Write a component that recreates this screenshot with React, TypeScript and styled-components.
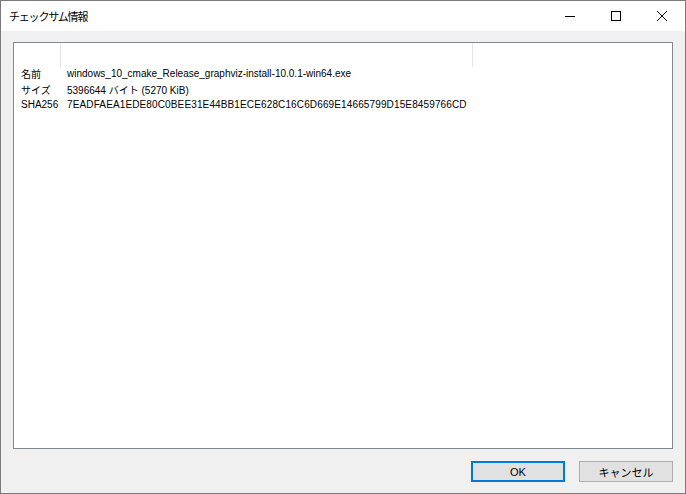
import React from "react";
import styled, { createGlobalStyle } from "styled-components";

const GlobalStyle = createGlobalStyle`
  html, body {
    margin: 0;
    padding: 0;
    background: #ffffff;
  }
  * {
    box-sizing: border-box;
  }
`;

const uiFont = `"Liberation Sans", "Noto Sans CJK JP", sans-serif`;

const Window = styled.div`
  width: 686px;
  height: 494px;
  border: 1px solid #7a7a7a;
  display: flex;
  flex-direction: column;
  background: #f0f0f0;
  font-family: ${uiFont};
  color: #000;
  overflow: hidden;
`;

const TitleBar = styled.div`
  height: 30px;
  background: #ffffff;
  display: flex;
  align-items: center;
  flex-shrink: 0;
`;

const Title = styled.div`
  flex: 1;
  padding-left: 8px;
  font-size: 11px;
  letter-spacing: -1.2px;
  font-family: "Noto Sans CJK JP", sans-serif;
`;

const Caption = styled.div`
  width: 46px;
  height: 30px;
  display: flex;
  align-items: center;
  justify-content: center;
`;

const Body = styled.div`
  flex: 1;
  display: flex;
  flex-direction: column;
  padding: 11px 12px 12px 12px;
`;

const ListBox = styled.div`
  height: 407px;
  background: #ffffff;
  border: 1px solid #828790;
  display: flex;
  flex-direction: column;
`;

const HeaderRow = styled.div`
  height: 24px;
  display: grid;
  grid-template-columns: 47px 412px 1fr;
`;

const HeaderCell = styled.div<{ $last?: boolean }>`
  border-right: ${(p) => (p.$last ? "none" : "1px solid #e5e5e5")};
`;

const Rows = styled.div`
  margin-top: -1px;
  display: flex;
  flex-direction: column;
`;

const Row = styled.div`
  height: 15.5px;
  display: grid;
  grid-template-columns: 46px 1fr;
  align-items: center;
  padding-left: 7px;
  font-size: 10px;
  white-space: nowrap;
`;

const Label = styled.span`
  font-size: 10px;
`;

const Value = styled.span<{ $spacing?: number }>`
  letter-spacing: ${(p) => p.$spacing ?? 0}px;
`;

const Footer = styled.div`
  display: flex;
  justify-content: flex-end;
  gap: 14px;
  padding-top: 12px;
`;

const Button = styled.button<{ $primary?: boolean }>`
  width: 94px;
  height: 21px;
  background: #e1e1e1;
  border: ${(p) => (p.$primary ? "2px solid #0078d7" : "1px solid #adadad")};
  font-family: ${uiFont};
  font-size: 11px;
  padding: 0;
  color: #000;
`;

const rows = [
  { label: "名前", value: "windows_10_cmake_Release_graphviz-install-10.0.1-win64.exe", spacing: 0 },
  { label: "サイズ", value: "5396644 バイト (5270 KiB)", spacing: 0 },
  { label: "SHA256", value: "7EADFAEA1EDE80C0BEE31E44BB1ECE628C16C6D669E14665799D15E8459766CD", spacing: 0.13 },
];

export default function App() {
  return (
    <>
      <GlobalStyle />
      <Window>
        <TitleBar>
          <Title>チェックサム情報</Title>
          <Caption>
            <svg width="10" height="10" viewBox="0 0 10 10">
              <line x1="0" y1="5.5" x2="10" y2="5.5" stroke="#000" strokeWidth="1" />
            </svg>
          </Caption>
          <Caption>
            <svg width="10" height="10" viewBox="0 0 10 10">
              <rect x="0.5" y="0.5" width="9" height="9" fill="none" stroke="#000" strokeWidth="1" />
            </svg>
          </Caption>
          <Caption>
            <svg width="10" height="10" viewBox="0 0 10 10">
              <path d="M0 0 L10 10 M10 0 L0 10" stroke="#000" strokeWidth="1" />
            </svg>
          </Caption>
        </TitleBar>
        <Body>
          <ListBox>
            <HeaderRow>
              <HeaderCell />
              <HeaderCell />
              <HeaderCell $last />
            </HeaderRow>
            <Rows>
              {rows.map((r) => (
                <Row key={r.label}>
                  <Label>{r.label}</Label>
                  <Value $spacing={r.spacing}>{r.value}</Value>
                </Row>
              ))}
            </Rows>
          </ListBox>
          <Footer>
            <Button $primary>OK</Button>
            <Button>キャンセル</Button>
          </Footer>
        </Body>
      </Window>
    </>
  );
}
